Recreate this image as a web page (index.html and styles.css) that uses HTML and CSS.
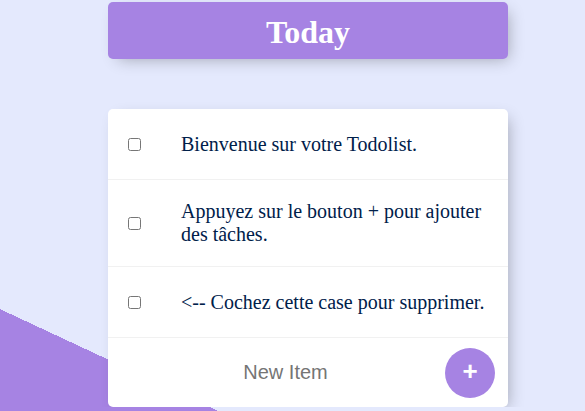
FILE: index.html
```
<!DOCTYPE html>
<html lang="fr">
<head>
<meta charset="utf-8">
<title>Todolist</title>
<link rel="stylesheet" href="styles.css">
</head>
<body>
<div class="page">
  <div class="box heading">
    <h1 class="title">Today</h1>
  </div>
  <div class="box list">
    <div class="item">
      <input class="check" type="checkbox">
      <p class="text">Bienvenue sur votre Todolist.</p>
    </div>
    <div class="item">
      <input class="check" type="checkbox">
      <p class="text">Appuyez sur le bouton + pour ajouter des tâches.</p>
    </div>
    <div class="item">
      <input class="check" type="checkbox">
      <p class="text">&lt;-- Cochez cette case pour supprimer.</p>
    </div>
    <form class="new-form">
      <input class="new-input" type="text" name="newItem" placeholder="New Item" autocomplete="off">
      <button class="add-btn" type="button">+</button>
    </form>
  </div>
</div>
</body>
</html>
```
FILE: styles.css
```
html {
  background-color: #E4E9FD;
  background-image: linear-gradient(25deg, #A683E3 50%, #E4E9FD 50%);
  background-size: 100% 891px;
  background-repeat: no-repeat;
  height: 100%;
}
body {
  margin: 0;
  font-family: "Liberation Serif", "Times New Roman", serif;
}
.page {
  width: 400px;
  margin-left: 108px;
  padding-top: 2px;
}
.box {
  background: #fff;
  border-radius: 5px;
  box-shadow: 5px 5px 15px -5px rgba(0, 0, 0, 0.3);
}
.heading {
  background-color: #A683E3;
  height: 57px;
  display: flex;
  align-items: center;
  justify-content: center;
}
.title {
  margin: 0;
  padding-top: 3px;
  color: #fff;
  font-size: 32px;
  font-weight: bold;
  font-family: "Liberation Serif", "Times New Roman", serif;
}
.list {
  margin-top: 50px;
}
.item {
  min-height: 70px;
  display: flex;
  align-items: center;
  border-bottom: 1px solid #F1F1F1;
}
.check {
  margin: 0 20px;
  width: 13px;
  height: 13px;
  flex-shrink: 0;
}
.text {
  margin: 0;
  padding: 20px;
  font-size: 20px;
  color: #00204a;
}
.new-form {
  height: 69px;
  display: flex;
  align-items: center;
  padding-left: 21px;
  gap: 3px;
}
.new-input {
  width: 313px;
  height: 60px;
  padding: 0;
  border: none;
  background: transparent;
  text-align: center;
  font-family: "Liberation Sans", Arial, sans-serif;
  font-size: 20px;
  outline: none;
}
.new-input::placeholder {
  color: #757575;
}
.add-btn {
  width: 50px;
  height: 50px;
  border: 0;
  border-radius: 50%;
  background-color: #A683E3;
  color: #fff;
  font-family: "Liberation Sans", Arial, sans-serif;
  font-size: 26px;
  font-weight: bold;
  line-height: 1;
  padding: 0 0 4px 0;
  flex-shrink: 0;
}
```
